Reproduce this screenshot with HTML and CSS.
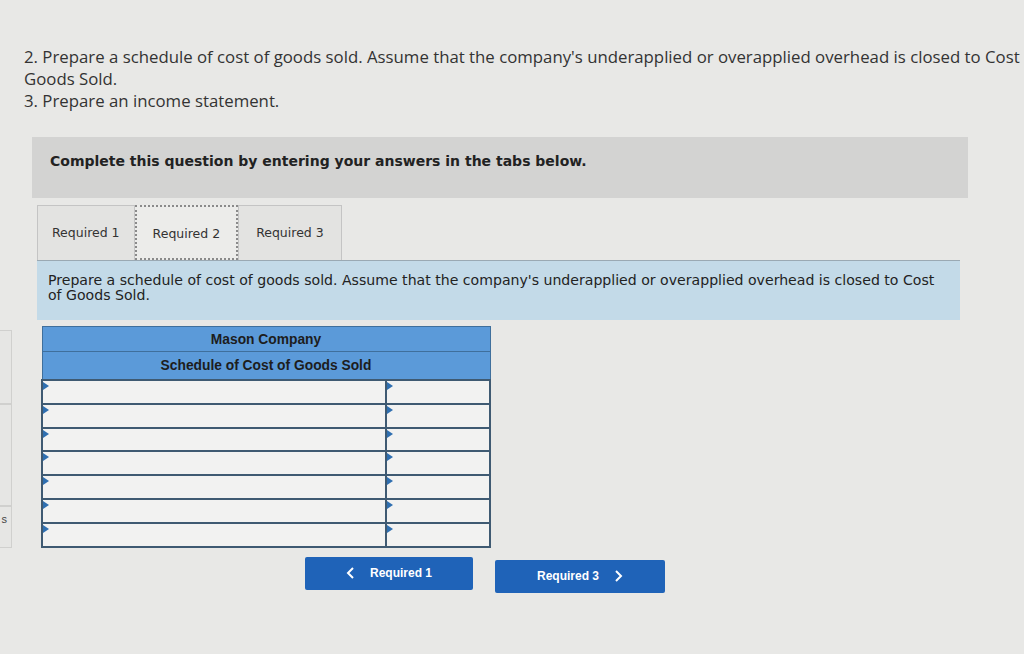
FILE: index.html
```html
<!doctype html>
<html>
<head>
    <title>Schedule of Cost of Goods Sold</title>
    <link rel="stylesheet" href="styles.css">
</head>
<body>
<div class="side">
    <div class="side-box b1"></div>
    <div class="side-box b2"></div>
    <div class="side-box b3">s</div>
</div>

<div class="page">
    <div class="question">
        2. Prepare a schedule of cost of goods sold. Assume that the company's underapplied or overapplied overhead is closed to Cost<br>
        Goods Sold.<br>
        3. Prepare an income statement.
    </div>

    <div class="notice">Complete this question by entering your answers in the tabs below.</div>

    <div class="tabs">
        <div class="tab">Required 1</div>
        <div class="tab active">Required 2</div>
        <div class="tab">Required 3</div>
    </div>

    <div class="prompt">Prepare a schedule of cost of goods sold. Assume that the company's underapplied or overapplied overhead is closed to Cost of Goods Sold.</div>

    <table class="sched">
        <tr><th colspan="2" class="h1">Mason Company</th></tr>
        <tr><th colspan="2" class="h2">Schedule of Cost of Goods Sold</th></tr>
        <tr><td class="lbl"></td><td class="amt"></td></tr>
        <tr><td class="lbl"></td><td class="amt"></td></tr>
        <tr><td class="lbl"></td><td class="amt"></td></tr>
        <tr><td class="lbl"></td><td class="amt"></td></tr>
        <tr><td class="lbl"></td><td class="amt"></td></tr>
        <tr><td class="lbl"></td><td class="amt"></td></tr>
        <tr><td class="lbl"></td><td class="amt"></td></tr>
    </table>

    <div class="nav">
        <button class="btn prev">
            <svg width="10" height="12" viewBox="0 0 10 12"><polyline points="7,1 2,6 7,11" fill="none" stroke="white" stroke-width="2"/></svg>
            <span>Required 1</span>
        </button>
        <button class="btn next">
            <span>Required 3</span>
            <svg width="10" height="12" viewBox="0 0 10 12"><polyline points="3,1 8,6 3,11" fill="none" stroke="white" stroke-width="2"/></svg>
        </button>
    </div>
</div>
</body>
</html>
```

FILE: styles.css
```css
body{
    margin: 0;
    background-color: #e8e8e6;
    color: #2a2a2a;
    overflow: hidden;
}
.page{
    padding: 46px 0 0 24px;
}
.question{
    font-family: "Open Sans", sans-serif;
    font-size: 16.8px;
    line-height: 22px;
    white-space: nowrap;
    color: #333;
}
.notice{
    margin: 25px 0 0 8px;
    width: 936px;
    height: 61px;
    box-sizing: border-box;
    padding: 16px 18px;
    background-color: #d3d3d2;
    font-family: "DejaVu Sans", Verdana, sans-serif;
    font-weight: bold;
    font-size: 14px;
    color: #222;
}
.tabs{
    display: flex;
    margin: 7px 0 0 13px;
}
.tab{
    height: 55px;
    box-sizing: border-box;
    padding: 19px 14px 0 14px;
    border: 1px solid #c4c4c4;
    border-bottom: none;
    background-color: #e3e3e1;
    font-family: "DejaVu Sans", Verdana, sans-serif;
    font-size: 12.5px;
    color: #333;
}
.tab.active{
    padding: 19px 16px 0 16px;
    background-color: #ececea;
    border: 2px dotted #8a8a8a;
}
.tab:last-child{
    padding: 19px 17px 0 17px;
}
.prompt{
    margin-left: 13px;
    width: 923px;
    box-sizing: border-box;
    padding: 12px 12px 17px 11px;
    background-color: #c3dae8;
    border-top: 1px solid #9aa9b3;
    font-family: "DejaVu Sans", Verdana, sans-serif;
    font-size: 14.1px;
    line-height: 15px;
    color: #222;
}
.sched{
    margin: 6px 0 0 17px;
    width: 450px;
    border-collapse: collapse;
    font-family: "Liberation Sans", Arial, sans-serif;
}
.sched th{
    background-color: #5b9ad9;
    font-size: 13.8px;
    color: #1d1d1d;
    text-align: center;
    border: 1px solid #3f6f9c;
}
.sched .h1{
    height: 22px;
}
.sched .h2{
    height: 25px;
}
.sched td{
    height: 21.8px;
    background-color: #f2f2f1;
    border: 2px solid #3f5a72;
    position: relative;
    padding: 0;
}
.sched .amt{
    width: 102px;
}
.sched td::before{
    content: "";
    position: absolute;
    left: 0;
    top: 1px;
    border-left: 6px solid #2f6fb0;
    border-top: 4px solid transparent;
    border-bottom: 4px solid transparent;
}
.nav{
    display: flex;
    margin: 9px 0 0 281px;
    gap: 22px;
}
.btn{
    display: flex;
    align-items: center;
    justify-content: center;
    gap: 14px;
    width: 168px;
    height: 33px;
    border: none;
    border-radius: 2px;
    background-color: #1f63b8;
    color: white;
    font-family: "Liberation Sans", Arial, sans-serif;
    font-weight: bold;
    font-size: 12px;
}
.btn.next{
    margin-top: 3px;
    width: 170px;
}
.side{
    position: absolute;
    left: -60px;
    top: 330px;
    width: 72px;
}
.side-box{
    border: 1px solid #d0d0ce;
    background-color: #e6e6e4;
    font-family: "Liberation Sans", Arial, sans-serif;
    font-size: 11px;
    color: #444;
    text-align: right;
    padding-right: 4px;
}
.b1{ height: 72px; }
.b2{ height: 100px; }
.b3{ height: 40px; line-height: 24px; }
```
